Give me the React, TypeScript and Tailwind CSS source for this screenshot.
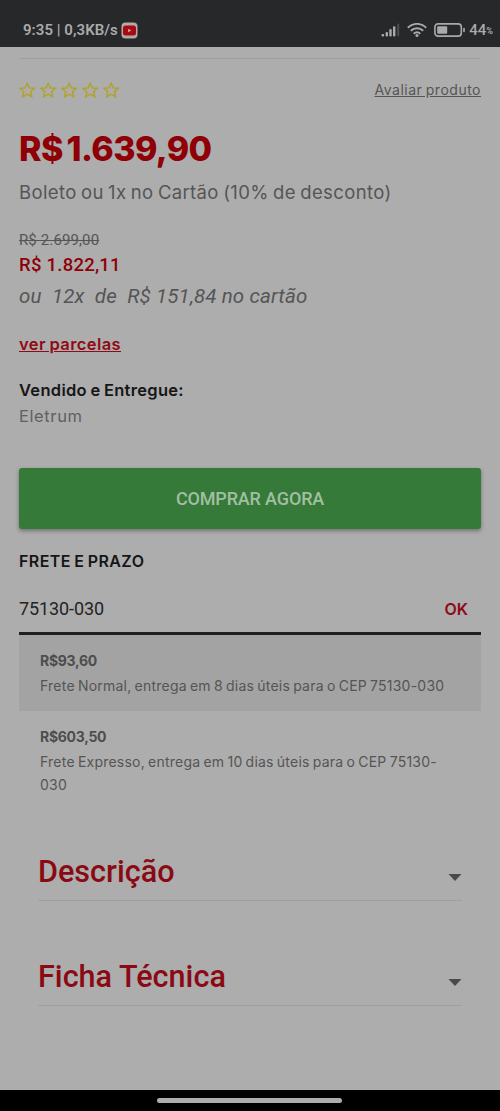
import React from "react";

type Shipping = {
  price: string;
  text: string;
};

const shippings: Shipping[] = [
  {
    price: "R$93,60",
    text: "Frete Normal, entrega em 8 dias úteis para o CEP 75130-030",
  },
  {
    price: "R$603,50",
    text: "Frete Expresso, entrega em 10 dias úteis para o CEP 75130-030",
  },
];

function StatusBar() {
  return (
    <div className="h-[47px] bg-[#26282a] flex items-start justify-between pl-[23px] pr-[7px] pt-[20px] font-['Roboto',sans-serif] text-[#a9aaab]">
      <div className="flex items-center h-5">
        <span className="text-[15px] font-semibold whitespace-nowrap tracking-[0.05px]">
          9:35 | 0,3KB/s
        </span>
        <svg className="ml-[3px] shrink-0" width="17" height="17" viewBox="0 0 17 17">
          <rect x="0.5" y="0.5" width="16" height="16" rx="4" fill="#b0aaa8" />
          <rect x="2" y="3.5" width="13" height="10" rx="2.5" fill="#a80a12" />
          <path d="M7.2 6.7 10.2 8.5 7.2 10.3Z" fill="#d0b0b0" />
        </svg>
      </div>
      <div className="flex items-center h-5">
        <svg width="20" height="14" viewBox="0 0 20 14" fill="#a9aaab">
          <rect x="0.5" y="11" width="2.6" height="2.5" rx="1" />
          <rect x="4.6" y="9" width="2.4" height="4.5" rx="1" />
          <rect x="8.3" y="6" width="2.4" height="7.5" rx="1" />
          <rect x="12" y="3.2" width="2.4" height="10.3" rx="1" />
          <rect x="16.2" y="0.5" width="2" height="13" rx="1" fill="#4b4d4f" />
        </svg>
        <svg
          className="ml-[6px]"
          width="20"
          height="14"
          viewBox="0 0 20 14"
          fill="none"
          stroke="#a9aaab"
          strokeWidth="1.9"
        >
          <path d="M0.8 4.7C6 -0.4 14 -0.4 19.2 4.7" />
          <path d="M3.8 7.8C7.4 4.4 12.6 4.4 16.2 7.8" />
          <path d="M6.7 10.7C8.7 8.9 11.3 8.9 13.3 10.7" />
          <circle cx="10" cy="12.4" r="1.5" fill="#a9aaab" stroke="none" />
        </svg>
        <svg className="ml-[7px]" width="32" height="14" viewBox="0 0 32 14">
          <rect x="0.9" y="0.9" width="26.4" height="12.2" rx="3.2" fill="none" stroke="#a9aaab" strokeWidth="1.6" />
          <rect x="3.2" y="3.2" width="10" height="7.6" rx="1" fill="#a9aaab" />
          <rect x="29.2" y="4.8" width="1.6" height="4.4" rx="0.8" fill="#a9aaab" />
        </svg>
        <span className="ml-[3px] text-[15px] font-medium">44</span>
        <span className="text-[9px] font-bold pt-[4px]">%</span>
      </div>
    </div>
  );
}

function Star() {
  return (
    <svg width="17" height="16" viewBox="0 0 17 16" fill="none" stroke="#afa32b" strokeWidth="1.5">
      <path d="M8.2 1.3 10.3 5.9 15.3 6.4 11.6 9.8 12.7 14.8 8.2 12.2 3.7 14.8 4.8 9.8 1 6.4 6.1 5.9Z" />
    </svg>
  );
}

function Section({ title }: { title: string }) {
  return (
    <div className="mx-[19px] h-[57px] border-b border-[#9f9f9f] flex items-center justify-between">
      <h2 className="font-['Roboto',sans-serif] font-medium text-[30.6px] text-[#8a0a14]">
        {title}
      </h2>
      <svg className="mt-[11px]" width="14" height="7" viewBox="0 0 14 7" fill="#4a4a4a">
        <path d="M0.5 0H13.5L7 7Z" />
      </svg>
    </div>
  );
}

function App() {
  return (
    <div className="w-[500px] h-[1111px] flex flex-col overflow-hidden bg-[#adadad] font-['Inter',sans-serif] text-[#555555]">
      <StatusBar />
      <main className="flex-1 px-[19px] pt-[11px] whitespace-nowrap">
        <div className="h-[63px] border-t border-[#9f9f9f] flex items-center justify-between">
          <div className="flex gap-1">
            {[1, 2, 3, 4, 5].map((item) => (
              <Star key={item} />
            ))}
          </div>
          <a className="text-[14px] tracking-[0.5px] [word-spacing:-1px] underline -mt-[2px]">
            Avaliar produto
          </a>
        </div>

        <div className="h-[54px] flex items-center text-[34px] font-extrabold text-[#8f0006] tracking-[-0.6px] [word-spacing:-3px]">
          R$ 1.639,90
        </div>
        <div className="h-[36px] flex items-center text-[18.5px] tracking-[0.36px] [word-spacing:-1.2px]">
          Boleto ou 1x no Cartão (10% de desconto)
        </div>

        <div className="font-['Roboto',sans-serif]">
          <div className="mt-[19px] h-5 flex items-center text-[15px] tracking-[0.12px]">
            <s>R$ 2.699,00</s>
          </div>
          <div className="h-[31px] flex items-center text-[18.5px] tracking-[0.25px] font-medium text-[#8f0006]">
            R$ 1.822,11
          </div>
          <div className="h-[30px] flex items-center text-[20.5px] tracking-[0.13px] italic whitespace-pre">
            {"ou  12x  de  R$ 151,84 no cartão"}
          </div>
        </div>

        <div className="mt-[19px] h-7 flex items-center">
          <a className="text-[16.5px] tracking-[0.4px] [word-spacing:-1px] font-semibold underline text-[#8f0a16]">
            ver parcelas
          </a>
        </div>

        <div className="mt-[19px] h-[26px] flex items-center text-[16.5px] tracking-[0.3px] [word-spacing:-1px] font-semibold text-[#161616]">
          Vendido e Entregue:
        </div>
        <div className="h-[26px] flex items-center text-[16.5px] tracking-[0.6px] text-[#606060]">
          Eletrum
        </div>

        <button className="mt-[39px] w-full h-[61px] rounded-[3px] bg-[#357a38] shadow-[0_2px_4px_rgba(0,0,0,0.35)] font-['Roboto',sans-serif] font-medium text-[18px] tracking-[-0.15px] text-[#a3bfa2]">
          COMPRAR AGORA
        </button>

        <div className="mt-[19px] h-[26px] flex items-center text-[16px] tracking-[0.4px] [word-spacing:-1px] font-semibold text-[#161616]">
          FRETE E PRAZO
        </div>
        <div className="mt-[10px] h-[51px] border-b-[3px] border-[#202020] flex items-center justify-between pr-[13px]">
          <span className="font-['Roboto',sans-serif] text-[18px] tracking-[-0.1px] text-[#242424]">
            75130-030
          </span>
          <span className="text-[16px] font-semibold text-[#8f0a16] pt-px">OK</span>
        </div>

        <div>
          {shippings.map((item) => (
            <div
              key={item.price}
              className="pt-[14px] pb-[14px] pl-[21px] pr-[30px] odd:bg-[#a3a3a3]"
            >
              <div className="h-[22px] flex items-center text-[14px] tracking-[-0.3px] font-bold text-[#4d4d4d]">
                {item.price}
              </div>
              <p className="mt-[3px] leading-[23px] text-[14px] tracking-[0.22px] [word-spacing:-1px] whitespace-normal">
                {item.text}
              </p>
            </div>
          ))}
        </div>

        <div className="mt-[34px]">
          <Section title="Descrição" />
        </div>
        <div className="mt-12">
          <Section title="Ficha Técnica" />
        </div>
      </main>
      <div className="h-[21px] bg-black flex justify-center pt-[8px] pr-px">
        <div className="w-[185px] h-[5px] rounded-full bg-[#adadad]"></div>
      </div>
    </div>
  );
}

export default App;
